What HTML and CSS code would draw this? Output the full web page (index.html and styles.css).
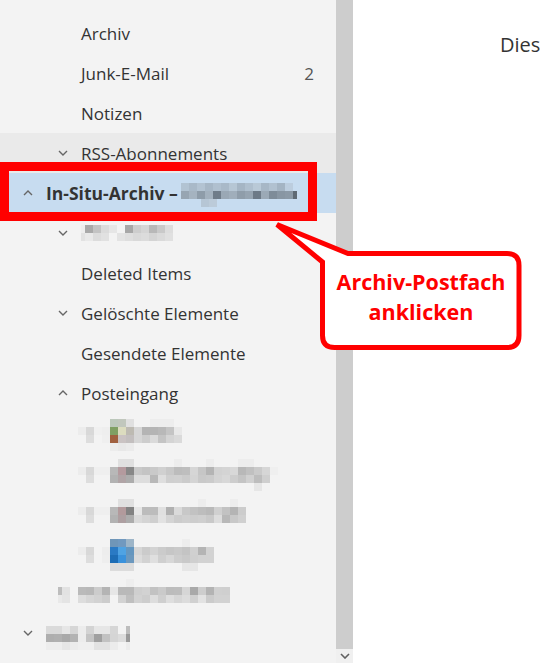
FILE: index.html
```html
<!DOCTYPE html>
<html lang="de">
<head>
  <meta charset="UTF-8" />
  <title>Ordnerliste</title>
  <link rel="stylesheet" href="styles.css">
</head>
<body>
  <div class="app">
    <nav class="folders">
      <ul class="tree">
        <li class="row l1"><span class="slot"></span><span class="name">Archiv</span></li>
        <li class="row l1"><span class="slot"></span><span class="name">Junk-E-Mail</span><span class="count">2</span></li>
        <li class="row l1"><span class="slot"></span><span class="name">Notizen</span></li>
        <li class="row l1 hover">
          <span class="slot"><svg class="chev" viewBox="0 0 10 6"><path d="M1 1l4 4 4-4"/></svg></span>
          <span class="name">RSS-Abonnements</span>
        </li>
        <li class="row l0 selected">
          <span class="slot"><svg class="chev" viewBox="0 0 10 6"><path d="M1 5l4-4 4 4"/></svg></span>
          <span class="name strong">In-Situ-Archiv –</span><span class="mosaic m-insitu"></span>
        </li>
        <li class="row l1">
          <span class="slot"><svg class="chev" viewBox="0 0 10 6"><path d="M1 1l4 4 4-4"/></svg></span>
          <span class="mosaic m-mailbox"></span>
        </li>
        <li class="row l1"><span class="slot"></span><span class="name">Deleted Items</span></li>
        <li class="row l1">
          <span class="slot"><svg class="chev" viewBox="0 0 10 6"><path d="M1 1l4 4 4-4"/></svg></span>
          <span class="name">Gelöschte Elemente</span>
        </li>
        <li class="row l1"><span class="slot"></span><span class="name">Gesendete Elemente</span></li>
        <li class="row l1">
          <span class="slot"><svg class="chev" viewBox="0 0 10 6"><path d="M1 5l4-4 4 4"/></svg></span>
          <span class="name">Posteingang</span>
        </li>
        <li class="row l2"><span class="mosaic m-sub1"></span></li>
        <li class="row l2"><span class="mosaic m-sub2"></span></li>
        <li class="row l2"><span class="mosaic m-sub3"></span></li>
        <li class="row l2"><span class="mosaic m-sub4"></span></li>
        <li class="row l1b"><span class="mosaic m-other"></span></li>
        <li class="row l0">
          <span class="slot"><svg class="chev" viewBox="0 0 10 6"><path d="M1 1l4 4 4-4"/></svg></span>
          <span class="mosaic m-account"></span>
        </li>
      </ul>
    </nav>

    <div class="scrollbar">
      <div class="thumb"></div>
      <div class="arrow"><svg viewBox="0 0 10 6"><path d="M1 1l4 4 4-4"/></svg></div>
    </div>

    <main class="reading">
      <p class="empty-note">Dies</p>
    </main>

    <!-- annotation overlay -->
    <div class="marker"></div>
    <div class="callout">
      <svg class="bubble" viewBox="268 216 258 140">
        <path d="M348 253.5H507Q519 253.5 519 265.5V335.5Q519 347.5 507 347.5H334.5Q322.5 347.5 322.5 335.5V262L277 224.5Z"/>
      </svg>
      <p class="callout-text">Archiv-Postfach<br>anklicken</p>
    </div>
  </div>
</body>
</html>
```

FILE: styles.css
```css
body {
  margin: 0;
  font-family: "Open Sans", "Noto Sans", sans-serif;
  color: #333;
  background: #fff;
}
.app {
  position: relative;
  display: flex;
  height: 663px;
  overflow: hidden;
}

/* folder pane */
.folders {
  width: 336px;
  flex: none;
  background: #f3f3f3;
}
.tree {
  list-style: none;
  margin: 0;
  padding: 13px 0 0;
}
.row {
  display: flex;
  align-items: center;
  height: 40px;
  font-size: 17px;
  white-space: nowrap;
}
.row.l0 { padding-left: 23px; }
.row.l1 { padding-left: 58px; }
.row.l1b { padding-left: 58px; }
.row.l2 { padding-left: 78px; }
.row.hover { background: #eaeaea; }
.row.selected { background: #c7dcf0; }
.slot {
  width: 23px;
  flex: none;
  display: flex;
  align-items: center;
}
.chev {
  width: 10px;
  height: 6px;
  fill: none;
  stroke: #666;
  stroke-width: 1.4;
}
.name { color: #333; }
.name.strong {
  font-weight: 700;
  font-size: 17.5px;
  color: #333;
  margin-right: 3px;
}
.count {
  margin-left: auto;
  padding-right: 22px;
  color: #555;
}

/* pixelated (anonymised) names */
.mosaic {
  display: block;
  flex: none;
}
.m-insitu {
  width: 116px;
  height: 24px;
  margin-top: 4px;
  background:
    linear-gradient(90deg,#b2c3d2 0 8px,#a9b9c8 8px 16px,#b3c3d2 16px 24px,#a7b7c6 24px 32px,#b0c0cf 32px 40px,#a9b9c8 40px 48px,#b6c6d4 48px 56px,#a5b5c4 56px 64px,#afbfce 64px 72px,#b9c9d7 72px 80px,#a7b7c6 80px 88px,#b1c1d0 88px 96px,#a4b4c3 96px 104px,#bccdde 104px 112px,transparent 112px) 0 0/100% 8px no-repeat,
    linear-gradient(90deg,#97a5b2 0 8px,#a5b3c0 8px 16px,#8e9ca9 16px 24px,#a3b1be 24px 32px,#6f7c89 32px 40px,#9aa8b5 40px 48px,#a0aebb 48px 56px,#8f9daa 56px 64px,#96a4b1 64px 72px,#6d7a87 72px 80px,#9ba9b6 80px 88px,#7e8c99 88px 96px,#8896a3 96px 104px,#8b99a6 104px 112px,#5f6a74 112px 116px) 0 8px/100% 8px no-repeat,
    linear-gradient(90deg,transparent 0 20px,#b6c6d5 20px 28px,#bccbd9 28px 36px,transparent 36px) 0 16px/100% 8px no-repeat;
}
.m-mailbox {
  width: 96px;
  height: 16px;
  background:
    linear-gradient(90deg,#eeeeee 0 4px,#a9a9a9 4px 12px,#c3c3c3 12px 20px,#dbdbdb 20px 28px,#e6e6e6 28px 36px,transparent 36px 44px,#a7a7a7 44px 52px,#cdcdcd 52px 60px,#d5d5d5 60px 68px,#b8b8b8 68px 76px,#c9c9c9 76px 84px,#dddddd 84px 92px,transparent 92px) 0 0/100% 8px no-repeat,
    linear-gradient(90deg,#e2e2e2 0 4px,#e9e9e9 4px 12px,#dcdcdc 12px 20px,#e1e1e1 20px 28px,transparent 28px 36px,#e3e3e3 36px 44px,#dedede 44px 52px,#d9d9d9 52px 60px,#dcdcdc 60px 68px,#d4d4d4 68px 76px,#dadada 76px 84px,#e0e0e0 84px 92px,transparent 92px) 0 8px/100% 8px no-repeat;
}
.m-sub1 {
  width: 104px;
  height: 32px;
  margin-top: 4px;
  background:
    linear-gradient(90deg,transparent 0 32px,#bcc8bb 32px 40px,#c1c7bd 40px 48px,#e0e0e0 48px 56px,transparent 56px 72px,#ededed 72px 96px,transparent 96px) 0 0/100% 8px no-repeat,
    linear-gradient(90deg,#ececec 0 8px,#d8d8d8 8px 16px,#f0f0f0 16px 24px,#eeeeee 24px 32px,#7f9f63 32px 40px,#dcdcbf 40px 48px,#bdbab2 48px 56px,#d6d6d6 56px 64px,#b4b4b4 64px 72px,#b4b4b4 72px 80px,#b8b8b8 80px 88px,#c4c4c4 88px 96px,#e8e8e8 96px 104px) 0 8px/100% 8px no-repeat,
    linear-gradient(90deg,transparent 0 8px,#dddddd 8px 16px,transparent 16px 24px,#efefef 24px 32px,#a0603f 32px 40px,#cac3c3 40px 48px,#c3bfbf 48px 56px,#d6d6d6 56px 64px,#cdcdcd 64px 72px,#dadada 72px 80px,#c4c4c4 80px 88px,#d4d4d4 88px 96px,#dadada 96px 104px) 0 16px/100% 8px no-repeat,
    linear-gradient(90deg,transparent 0 32px,#ececec 32px 40px,#e8e8e8 40px 48px,#ebebeb 48px 56px,transparent 56px) 0 24px/100% 8px no-repeat;
}
.m-sub2 {
  width: 200px;
  height: 32px;
  margin-top: 4px;
  background:
    linear-gradient(90deg,transparent 0 40px,#e0e0e0 40px 56px,transparent 56px 96px,#ededed 96px 104px,transparent 104px 128px,#ededed 128px 136px,transparent 136px 160px,#ededed 160px 176px,transparent 176px) 0 0/100% 8px no-repeat,
    linear-gradient(90deg,#ececec 0 8px,#d8d8d8 8px 16px,#efefef 16px 32px,#b8b8b8 32px 40px,#b49a9e 40px 48px,#878787 48px 56px,#c9c9c9 56px 64px,#c4c4c4 64px 72px,#c9c9c9 72px 80px,#d0d0d0 80px 88px,#c8c8c8 88px 96px,#bcbcbc 96px 104px,#bebebe 104px 112px,#d6d6d6 112px 120px,#c6c6c6 120px 128px,#b4b4b4 128px 136px,#d2d2d2 136px 144px,#d4d4d4 144px 152px,#d8d8d8 152px 160px,#b8b8b8 160px 168px,#c0c0c0 168px 176px,#cacaca 176px 184px,#d6d6d6 184px 192px,#efefef 192px 200px) 0 8px/100% 8px no-repeat,
    linear-gradient(90deg,transparent 0 8px,#dddddd 8px 16px,transparent 16px 32px,#b2b2b2 32px 40px,#b0a4a6 40px 48px,#acacac 48px 56px,#dddddd 56px 72px,#b8b8b8 72px 80px,#dedede 80px 88px,#cfcfcf 88px 96px,#d0d0d0 96px 104px,#cbcbcb 104px 112px,#d4d4d4 112px 120px,#c9c9c9 120px 128px,#cbcbcb 128px 136px,#d4d4d4 136px 144px,#d8d8d8 144px 152px,#cdcdcd 152px 160px,#c4c4c4 160px 168px,#d0d0d0 168px 176px,#bdbdbd 176px 184px,#cfcfcf 184px 192px,transparent 192px) 0 16px/100% 8px no-repeat,
    linear-gradient(90deg,transparent 0 176px,#e6e6e6 176px 184px,transparent 184px) 0 24px/100% 8px no-repeat;
}
.m-sub3 {
  width: 168px;
  height: 32px;
  margin-top: 4px;
  background:
    linear-gradient(90deg,transparent 0 40px,#e0e0e0 40px 56px,transparent 56px 120px,#ededed 120px 128px,transparent 128px 152px,#ededed 152px 160px,transparent 160px) 0 0/100% 8px no-repeat,
    linear-gradient(90deg,#ececec 0 8px,#d8d8d8 8px 16px,#efefef 16px 32px,#b8b8b8 32px 40px,#b29a9c 40px 48px,#828282 48px 56px,#e6e6e6 56px 64px,#bcbcbc 64px 80px,#e0e0e0 80px 88px,#b0b0b0 88px 96px,#dadada 96px 104px,#c8c8c8 104px 112px,#c2c2c2 112px 120px,#bdbdbd 120px 128px,#b9b9b9 128px 136px,#d0d0d0 136px 144px,#c2c2c2 144px 152px,#b4b4b4 152px 160px,#cccccc 160px 168px) 0 8px/100% 8px no-repeat,
    linear-gradient(90deg,transparent 0 8px,#dddddd 8px 16px,transparent 16px 32px,#b2b2b2 32px 40px,#ad9fa1 40px 48px,#acacac 48px 56px,#dadada 56px 64px,#d4d4d4 64px 72px,#cfcfcf 72px 80px,#e2e2e2 80px 88px,#d4d4d4 88px 96px,#cccccc 96px 104px,#cfcfcf 104px 112px,#cdcdcd 112px 120px,#cfcfcf 120px 128px,#c9c9c9 128px 136px,#dddddd 136px 144px,#b8b8b8 144px 152px,#c8c8c8 152px 160px,#d0d0d0 160px 168px) 0 16px/100% 8px no-repeat;
}
.m-sub4 {
  width: 136px;
  height: 32px;
  margin-top: 4px;
  background:
    linear-gradient(90deg,transparent 0 32px,#6f96b8 32px 40px,#7199bf 40px 48px,#9db5c8 48px 56px,transparent 56px 104px,#ededed 104px 112px,transparent 112px) 0 0/100% 8px no-repeat,
    linear-gradient(90deg,#ececec 0 8px,#d8d8d8 8px 16px,transparent 16px 24px,#ededed 24px 32px,#2a7ac4 32px 40px,#4fa3e3 40px 48px,#6496bf 48px 56px,#d6d6d6 56px 64px,#cbcbcb 64px 72px,#d3d3d3 72px 80px,#cbcbcb 80px 88px,#c6c6c6 88px 96px,#c9c9c9 96px 104px,#c4c4c4 104px 112px,#d0d0d0 112px 120px,#b4b4b4 120px 128px,#d2d2d2 128px 136px) 0 8px/100% 8px no-repeat,
    linear-gradient(90deg,transparent 0 8px,#dddddd 8px 16px,transparent 16px 24px,#eeeeee 24px 32px,#1e6db5 32px 40px,#3a92dc 40px 48px,#6b98be 48px 56px,#dcdcdc 56px 64px,#d2d2d2 64px 72px,#dfdfdf 72px 80px,#cfcfcf 80px 88px,#d7d7d7 88px 96px,#cdcdcd 96px 104px,#c9c9c9 104px 112px,#cfcfcf 112px 120px,#d2d2d2 120px 136px) 0 16px/100% 8px no-repeat,
    linear-gradient(90deg,transparent 0 32px,#dcdcdc 32px 56px,transparent 56px 104px,#e6e6e6 104px 120px,transparent 120px) 0 24px/100% 8px no-repeat;
}
.m-other {
  width: 172px;
  height: 24px;
  margin-top: -4px;
  background:
    linear-gradient(90deg,transparent 0 68px,#eeeeee 68px 76px,transparent 76px) 0 0/100% 8px no-repeat,
    linear-gradient(90deg,#bdbdbd 0 4px,#e2e2e2 4px 12px,transparent 12px 20px,#bababa 20px 28px,#b8b8b8 28px 36px,#cccccc 36px 44px,#b4b4b4 44px 52px,#e6e6e6 52px 60px,#b9b9b9 60px 76px,#cfcfcf 76px 84px,#d2d2d2 84px 92px,#c2c2c2 92px 100px,#cacaca 100px 108px,#bcbcbc 108px 116px,#bdbdbd 116px 124px,#d6d6d6 124px 132px,#a9a9a9 132px 140px,#cdcdcd 140px 148px,#b3b3b3 148px 156px,#d0d0d0 156px 164px,#cfcfcf 164px 172px) 0 8px/100% 8px no-repeat,
    linear-gradient(90deg,#e9e9e9 0 4px,#e4e4e4 4px 12px,transparent 12px 20px,#dddddd 20px 28px,#d6d6d6 28px 36px,#d2d2d2 36px 44px,#cccccc 44px 52px,transparent 52px 60px,#d2d2d2 60px 68px,#bfbfbf 68px 76px,#d2d2d2 76px 84px,#cdcdcd 84px 92px,#dddddd 92px 100px,#cfcfcf 100px 108px,#dedede 108px 116px,#d6d6d6 116px 124px,#dcdcdc 124px 132px,#d0d0d0 132px 140px,#e2e2e2 140px 148px,#cbcbcb 148px 156px,#d2d2d2 156px 172px) 0 16px/100% 8px no-repeat;
}
.m-account {
  width: 84px;
  height: 24px;
  margin-top: 10px;
  background:
    linear-gradient(90deg,#dadada 0 16px,#e6e6e6 16px 24px,#d6d6d6 24px 32px,#ececec 32px 40px,#d3d3d3 40px 48px,#e6e6e6 48px 64px,#d6d6d6 64px 72px,transparent 72px 80px,#bdbdbd 80px 84px) 0 0/100% 8px no-repeat,
    linear-gradient(90deg,#aeaeae 0 8px,#b0b0b0 8px 16px,#a9a9a9 16px 24px,#b3b3b3 24px 32px,#ececec 32px 40px,#c4c4c4 40px 48px,#a0a0a0 48px 56px,#c2c2c2 56px 64px,#d5d5d5 64px 72px,#dcdcdc 72px 80px,#9a9a9a 80px 84px) 0 8px/100% 8px no-repeat,
    linear-gradient(90deg,#ededed 0 16px,#e6e6e6 16px 24px,#ececec 24px 32px,#efefef 32px 48px,#e2e2e2 48px 64px,#ececec 64px 72px,transparent 72px 80px,#ececec 80px 84px) 0 16px/100% 8px no-repeat;
}

/* scrollbar */
.scrollbar {
  width: 17px;
  flex: none;
  display: flex;
  flex-direction: column;
  background: #f0f0f0;
}
.thumb {
  flex: 1;
  background: #cdcdcd;
}
.arrow {
  height: 14px;
  display: flex;
  align-items: center;
  justify-content: center;
}
.arrow svg {
  width: 10px;
  height: 6px;
  fill: none;
  stroke: #606060;
  stroke-width: 1.6;
}

/* reading pane */
.reading {
  flex: 1;
  min-width: 0;
  padding-left: 147px;
  overflow: hidden;
}
.empty-note {
  margin: 31px 0 0;
  font-size: 20px;
  color: #333;
  white-space: nowrap;
}

/* annotation */
.marker {
  position: absolute;
  left: 0;
  top: 162px;
  width: 317px;
  height: 59px;
  box-sizing: border-box;
  border: 9px solid #ff0000;
}
.callout {
  position: absolute;
  left: 268px;
  top: 216px;
  width: 258px;
  height: 140px;
}
.bubble {
  position: absolute;
  left: 0;
  top: 0;
  width: 258px;
  height: 140px;
  fill: #fff;
  stroke: #ff0000;
  stroke-width: 5;
  stroke-linejoin: miter;
}
.callout-text {
  position: absolute;
  left: 52px;
  top: 51px;
  width: 202px;
  margin: 0;
  text-align: center;
  font-size: 21.5px;
  line-height: 30px;
  font-weight: 700;
  color: #ff0000;
}
```
